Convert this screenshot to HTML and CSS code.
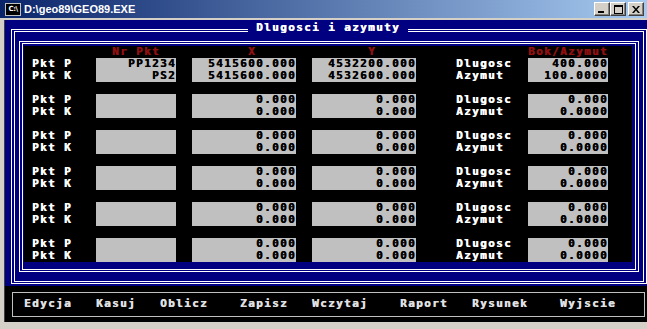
FILE: index.html
```html
<!DOCTYPE html>
<html lang="pl">
  <head>
    <meta charset="UTF-8" />
    <title>D:\geo89\GEO89.EXE</title>
    <link rel="stylesheet" href="styles.css" />
  </head>
  <body>
    <div class="window">
      <div class="titlebar">
        <span class="app-icon">C:\</span>
        <span class="title">D:\geo89\GEO89.EXE</span>
        <div class="caption-buttons">
          <span class="cap-btn">
            <svg width="8" height="7" viewBox="0 0 8 7"><rect x="0" y="5" width="6" height="2" fill="#000" /></svg>
          </span>
          <span class="cap-btn">
            <svg width="9" height="9" viewBox="0 0 9 9"><rect x="0.5" y="0.5" width="8" height="8" fill="none" stroke="#000" /><rect x="0" y="0" width="9" height="2" fill="#000" /></svg>
          </span>
          <span class="cap-btn close">
            <svg width="8" height="7" viewBox="0 0 8 7"><path d="M0 0h2l2 2.5L6 0h2L5 3.5 8 7H6L4 4.5 2 7H0l3-3.5z" fill="#000" /></svg>
          </span>
        </div>
      </div>

      <div class="client">
        <div class="console">
          <div class="box-outer"><div class="box-line"></div></div>
          <div class="box-inner"><div class="box-line"></div></div>
          <div class="box-title">Dlugosci i azymuty</div>

          <div class="panel">
            <div class="head-row">
              <span class="head h-nr">Nr Pkt</span>
              <span class="head h-x">X</span>
              <span class="head h-y">Y</span>
              <span class="head h-bok">Bok/Azymut</span>
            </div>

            <div class="group">
              <div class="label">Pkt P<br />Pkt K</div>
              <div class="field f-nr">PP1234<br />PS2</div>
              <div class="field f-x">5415600.000<br />5415600.000</div>
              <div class="field f-y">4532200.000<br />4532600.000</div>
              <div class="label l-bok">Dlugosc<br />Azymut</div>
              <div class="field f-bok">400.000<br />100.0000</div>
            </div>

            <div class="group">
              <div class="label">Pkt P<br />Pkt K</div>
              <div class="field f-nr"></div>
              <div class="field f-x">0.000<br />0.000</div>
              <div class="field f-y">0.000<br />0.000</div>
              <div class="label l-bok">Dlugosc<br />Azymut</div>
              <div class="field f-bok">0.000<br />0.0000</div>
            </div>

            <div class="group">
              <div class="label">Pkt P<br />Pkt K</div>
              <div class="field f-nr"></div>
              <div class="field f-x">0.000<br />0.000</div>
              <div class="field f-y">0.000<br />0.000</div>
              <div class="label l-bok">Dlugosc<br />Azymut</div>
              <div class="field f-bok">0.000<br />0.0000</div>
            </div>

            <div class="group">
              <div class="label">Pkt P<br />Pkt K</div>
              <div class="field f-nr"></div>
              <div class="field f-x">0.000<br />0.000</div>
              <div class="field f-y">0.000<br />0.000</div>
              <div class="label l-bok">Dlugosc<br />Azymut</div>
              <div class="field f-bok">0.000<br />0.0000</div>
            </div>

            <div class="group">
              <div class="label">Pkt P<br />Pkt K</div>
              <div class="field f-nr"></div>
              <div class="field f-x">0.000<br />0.000</div>
              <div class="field f-y">0.000<br />0.000</div>
              <div class="label l-bok">Dlugosc<br />Azymut</div>
              <div class="field f-bok">0.000<br />0.0000</div>
            </div>

            <div class="group">
              <div class="label">Pkt P<br />Pkt K</div>
              <div class="field f-nr"></div>
              <div class="field f-x">0.000<br />0.000</div>
              <div class="field f-y">0.000<br />0.000</div>
              <div class="label l-bok">Dlugosc<br />Azymut</div>
              <div class="field f-bok">0.000<br />0.0000</div>
            </div>
          </div>

          <div class="menu-bar">
            <div class="menu-box">
              <span class="menu-item">Edycja</span>
              <span class="menu-item">Kasuj</span>
              <span class="menu-item">Oblicz</span>
              <span class="menu-item">Zapisz</span>
              <span class="menu-item">Wczytaj</span>
              <span class="menu-item">Raport</span>
              <span class="menu-item">Rysunek</span>
              <span class="menu-item">Wyjscie</span>
            </div>
          </div>
        </div>
      </div>
    </div>
  </body>
</html>
```

FILE: styles.css
```css
* {
  margin: 0;
  padding: 0;
  box-sizing: border-box;
}

body {
  width: 647px;
  height: 329px;
  overflow: hidden;
  background-color: #d4d0c8;
}

.window {
  width: 647px;
  height: 329px;
  display: flex;
  flex-direction: column;
  background-color: #d4d0c8;
}

/* title bar */

.titlebar {
  height: 18px;
  margin-bottom: 2px;
  padding-left: 5px;
  display: flex;
  align-items: center;
  background: linear-gradient(to right, #0a246a, #a6caf0);
}

.app-icon {
  width: 16px;
  height: 13px;
  margin-right: 3px;
  background-color: #000;
  border: 1px solid #c0c0c0;
  color: #fff;
  font: bold 7px/11px "DejaVu Sans", sans-serif;
  text-align: center;
  letter-spacing: -0.5px;
}

.title {
  color: #fff;
  font: bold 11px/18px "Liberation Sans", sans-serif;
}

.caption-buttons {
  margin-left: auto;
  margin-right: 3px;
  display: flex;
}

.cap-btn {
  width: 16px;
  height: 14px;
  display: flex;
  align-items: center;
  justify-content: center;
  background-color: #d4d0c8;
  border: 1px solid;
  border-color: #fff #404040 #404040 #fff;
  box-shadow: inset -1px -1px 0 #808080;
}

.cap-btn.close {
  margin-left: 2px;
}

/* console: 80 x 25 cells of 8 x 12 px */

.client {
  flex: 1;
  padding-left: 4px;
}

.console {
  width: 643px;
  height: 302px;
  display: grid;
  grid-template-columns: 3px repeat(80, 8px);
  grid-template-rows: 2px repeat(25, 12px);
  background-color: #000080;
  color: #fff;
  font: bold 11px/12px "DejaVu Sans Mono", monospace;
  letter-spacing: 1.38px;
  text-shadow: 0.5px 0 0 currentColor;
  border-left: 1px solid #404040;
}

.box-outer,
.box-inner {
  margin: 7px 1px 2px 3px;
  padding: 1px 2px;
  border: 1px solid #fff;
}

.box-line {
  height: 100%;
  border: 1px solid #fff;
}

.box-outer {
  grid-column: 2 / 82;
  grid-row: 2 / 24;
}

.box-inner {
  grid-column: 3 / 81;
  grid-row: 3 / 23;
}

.box-title {
  grid-column: 32 / 52;
  grid-row: 2;
  background-color: #000080;
  text-align: center;
  white-space: pre;
}

.panel {
  grid-column: 4 / 80;
  grid-row: 4 / 22;
  background-color: #000;
  display: flex;
  flex-direction: column;
  gap: 12px;
}

.head-row,
.group {
  display: grid;
  grid-template-columns: 8px 64px 80px 16px 104px 16px 104px 40px 72px 80px;
}

.head-row {
  height: 12px;
  margin-bottom: -12px;
}

.head {
  color: #901010;
}

.h-nr {
  grid-column: 3;
  padding-left: 16px;
}

.h-x {
  grid-column: 5;
  padding-left: 56px;
}

.h-y {
  grid-column: 7;
  padding-left: 56px;
}

.h-bok {
  grid-column: 10;
}

.group {
  height: 24px;
}

.label {
  grid-column: 2;
  white-space: nowrap;
}

.label.l-bok {
  grid-column: 9;
}

.field {
  background-color: #c0c0c0;
  color: #000;
  text-align: right;
  white-space: nowrap;
}

.f-nr {
  grid-column: 3;
}

.f-x {
  grid-column: 5;
}

.f-y {
  grid-column: 7;
}

.f-bok {
  grid-column: 10;
}

/* bottom menu */

.menu-bar {
  grid-column: 1 / 82;
  grid-row: 24 / 27;
  background-color: #000;
  padding: 6px 3px 5px 7px;
}

.menu-box {
  height: 25px;
  border: 1px solid #c0c0c0;
  padding: 5px 0 0 11px;
  display: grid;
  grid-template-columns: 72px 64px 80px 72px 88px 72px 88px auto;
  color: #e0e0e0;
}
```
